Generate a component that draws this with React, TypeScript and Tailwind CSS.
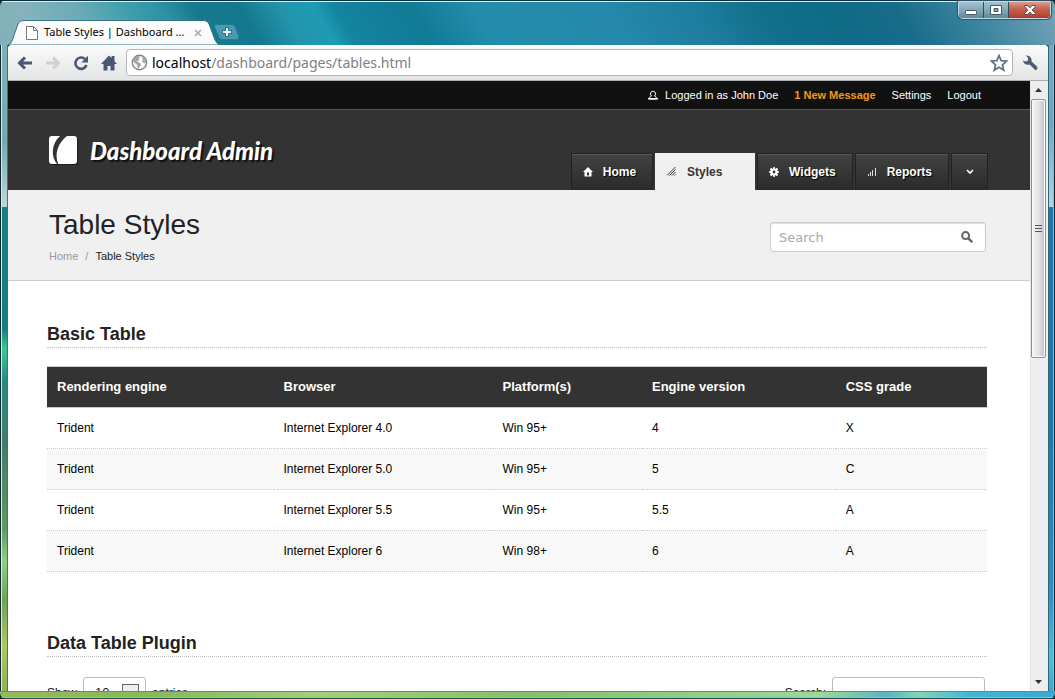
import type { ReactNode } from "react";

const rows = [
  ["Trident", "Internet Explorer 4.0", "Win 95+", "4", "X"],
  ["Trident", "Internet Explorer 5.0", "Win 95+", "5", "C"],
  ["Trident", "Internet Explorer 5.5", "Win 95+", "5.5", "A"],
  ["Trident", "Internet Explorer 6", "Win 98+", "6", "A"],
];

const columns = [
  { label: "Rendering engine", width: "w-[24.1%]" },
  { label: "Browser", width: "w-[23.3%]" },
  { label: "Platform(s)", width: "w-[15.9%]" },
  { label: "Engine version", width: "w-[20.6%]" },
  { label: "CSS grade", width: "w-[16.1%]" },
];

function WindowButtons() {
  return (
    <div className="absolute top-0 right-1 flex h-[18px] overflow-hidden rounded-b-[5px] border border-[#c5dbe3] bg-[#24404f] shadow-[0_0_1px_1px_#2d5566]">
      <button aria-label="Minimize" className="flex w-[25px] items-center justify-center border-r border-[#2d4c5c] bg-linear-to-b from-[#a5c3cf] via-[#86a9b9] via-45% to-[#5f8a9e]">
        <svg width="14" height="12" viewBox="0 0 14 12"><rect x="1.5" y="6.5" width="11" height="4" rx="1" fill="#fff" stroke="#47596a" /></svg>
      </button>
      <button aria-label="Maximize" className="flex w-[25px] items-center justify-center border-r border-[#2d4c5c] bg-linear-to-b from-[#a5c3cf] via-[#86a9b9] via-45% to-[#5f8a9e]">
        <svg width="14" height="12" viewBox="0 0 14 12"><path fillRule="evenodd" d="M1.5 1.5h11v9h-11zM5 4.5v3h4v-3z" fill="#fff" stroke="#47596a" /></svg>
      </button>
      <button aria-label="Close window" className="flex w-[41px] items-center justify-center bg-linear-to-b from-[#dc9a8c] via-[#c4614f] via-45% to-[#b53a25]">
        <svg width="14" height="12" viewBox="0 0 14 12"><path d="M1.5 1.5h3.3L7 3.8l2.2-2.3h3.3v1L9.2 6l3.3 3.5v1H9.2L7 8.2l-2.2 2.3H1.5v-1L4.8 6 1.5 2.5z" fill="#fff" stroke="#6b4048" /></svg>
      </button>
    </div>
  );
}

function TitleBar() {
  return (
    <div className="relative h-[45px] shrink-0 border-t border-[#0d2f40] bg-[linear-gradient(60deg,#7fb0b8_0%,#86b3bb_4%,#6aabb6_9%,#46a0ae_13%,#2d91a3_17%,#17798e_20%,#14778c_24%,#2294ab_28%,#1f9bb4_31%,#14859f_33%,#117a95_40%,#248dac_46%,#2489aa_58%,#1f7d9f_66%,#12708c_72%,#0f6a86_79%,#186c8a_85%,#3d86a0_92%,#78a5b9_100%)] shadow-[inset_0_1px_0_#d9f1f6]">
      <div className="absolute bottom-0 left-2 h-[25px] w-[232px]">
        <svg className="absolute inset-0" width="232" height="25" viewBox="0 0 232 25">
          <defs>
            <linearGradient id="tab" x1="0" y1="0" x2="0" y2="1"><stop offset="0" stopColor="#fff" /><stop offset="1" stopColor="#f8f8f9" /></linearGradient>
          </defs>
          <path d="M206.5 7Q205.5 4.5 208 4.5H224Q226.5 4.5 227.5 7L230.8 16.5Q231.5 19.5 229 19.5H215Q212 19.5 211 17.5Z" fill="#4b98af" stroke="#237b98" />
          <path d="M0 25Q3 24 4 21L10 4Q11.5.5 15 .5H196Q199.5.5 201 4L207 20Q209 25 213 25Z" fill="url(#tab)" stroke="#33758a" />
          <path d="M217.5 7.500h3v3h3v3h-3v3h-3v-3h-3v-3h3z" fill="#e4f1f6" stroke="#286f88" />
          <path d="M18.5 6.5h7l4 4v9h-11zM25.5 6.5v4h4" fill="#fff" stroke="#777" />
        </svg>
        <div className="relative flex h-full items-center pl-9">
          <span className="w-[143px] text-[11px] whitespace-nowrap text-black">Table Styles | Dashboard ...</span>
          <button aria-label="Close tab" className="ml-[3px] flex h-4 w-4 items-center justify-center">
            <svg width="8" height="8" viewBox="0 0 8 8"><path d="M1 1l6 6M7 1L1 7" stroke="#aaa" strokeWidth="1.5" /></svg>
          </button>
          <button aria-label="New tab" className="ml-2 h-4 w-6" />
        </div>
      </div>
      <WindowButtons />
    </div>
  );
}

function ToolButton({ label, children }: { label: string; children: ReactNode }) {
  return (
    <button aria-label={label} className="flex h-7 w-7 items-center justify-center">
      <svg width="16" height="16" viewBox="0 0 16 16" fill="none">{children}</svg>
    </button>
  );
}

function Toolbar() {
  return (
    <div className="flex h-9 shrink-0 items-center rounded-t-[3px] border-b border-[#a9acb0] bg-linear-to-b from-[#fbfbfb] to-[#e3e4e5] pr-1 pl-[3px]">
      <ToolButton label="Back"><path d="M15 8H3M8 2.5L2.5 8L8 13.5" stroke="#4a5871" strokeWidth="3" /></ToolButton>
      <ToolButton label="Forward"><path d="M1 8h12M8 2.5L13.5 8L8 13.5" stroke="#cfd0d2" strokeWidth="3" /></ToolButton>
      <ToolButton label="Reload"><path d="M13.5 10A5.700 5.700 0 1 1 12 4" stroke="#4a5871" strokeWidth="2.6" /><path d="M15 .8v6.700H8.300z" fill="#4a5871" /></ToolButton>
      <ToolButton label="Home page"><path d="M8 .5l2.5 2.6V1h3v5.2L16 9h-2.5v6.5H9.5V11h-3v4.5h-4V9H0z" fill="#4a5871" /></ToolButton>
      <div className="ml-[3px] flex h-[27px] flex-1 items-center rounded-[4px] border border-[#b4b6b9] bg-white px-1">
        <svg width="17" height="17" viewBox="0 0 17 17">
          <circle cx="8.5" cy="8.5" r="7.2" fill="#fdfdfd" stroke="#858585" strokeWidth="1.4" />
          <path d="M2 5.5C3.5 2.8 6 1.8 8 2l1 1.500-1.500 1.200.5 1.500-2 1.300 3.500 1.700.5 1.800-2.500 3.500-1-.5-.5-3.500L3 8.500zM11 2.500l3 2.500 1 3.500-2 1-1.800-2 .5-2z" fill="#a5a5a5" />
        </svg>
        <input aria-label="Address" defaultValue="localhost/dashboard/pages/tables.html" className="sr-only" />
        <div className="ml-1 flex-1 text-[14px] leading-6 text-[#808080]"><span className="text-black">localhost</span>/dashboard/pages/tables.html</div>
        <button aria-label="Bookmark this page">
          <svg width="18" height="18" viewBox="0 0 18 18"><path d="M9 1.6l2.200 5 5.400.5-4.100 3.600 1.200 5.400L9 13.300l-4.700 2.800 1.200-5.400L1.400 7.100l5.400-.5z" fill="#fff" stroke="#65728a" strokeWidth="1.8" /></svg>
        </button>
      </div>
      <button aria-label="Customize and control" className="ml-[3px] flex h-7 w-7 items-center justify-center">
        <svg width="16" height="16" viewBox="0 0 16 16"><path d="M3.5.6Q8 .3 9.300 3.500Q9.700 5 9.500 6.300L15.300 12Q16 14.500 13.500 15.300L7.600 9.500Q2.500 10.700.7 5.500L3.700 6.600 6.200 5.300 5.700 2.200Z" fill="#4e5c79" /></svg>
      </button>
    </div>
  );
}

function NavTab({ label, children }: { label: string; children: ReactNode }) {
  return (
    <a href="#" className="flex items-center gap-[10px] border border-b-0 border-[#222] bg-linear-to-b from-[#424242] to-[#2b2b2b] pr-4 pl-[11px] text-[12px] font-bold text-white shadow-[inset_0_1px_0_#5a5a5a] [text-shadow:1px_1px_1px_#000]">
      {children}
      {label}
    </a>
  );
}

function SiteHeader() {
  return (
    <header>
      <div className="flex h-[29px] items-center justify-end gap-4 border-b border-[#555] bg-[#111] pr-[49px] text-[11px] text-white">
        <a href="#" className="flex items-center gap-[7px]">
          <svg width="10" height="10" viewBox="0 0 10 10"><path d="M3.5 6A2.6 2.6 0 1 1 6.5 6L8.5 7.5V9H1.5V7.5Z" fill="none" stroke="#fff" /><path d="M0 8h10v1.5H0z" fill="#fff" /></svg>
          Logged in as John Doe
        </a>
        <a href="#" className="font-bold text-[#f39a12]">1 New Message</a>
        <a href="#">Settings</a>
        <a href="#">Logout</a>
      </div>
      <div className="flex h-20 items-end justify-between bg-[#333] pr-[42px] pl-[41px]">
        <a href="#" className="mb-6 flex items-center gap-3">
          <svg width="29" height="30" viewBox="0 0 29 30">
            <rect x="1" y="1" width="28" height="28" rx="3" fill="#1c1c1c" />
            <rect width="28" height="28" rx="3" fill="#fff" />
            <path d="M11 0C2 8 2 21 8 28h1.300C5 18 9 7 18 0z" fill="#333" />
          </svg>
          <span className="font-['Lato'] text-[24px] leading-7 font-black text-white italic [text-shadow:2px_2px_1px_#111]">Dashboard Admin</span>
        </a>
        <nav className="flex h-[37px] gap-[2px]">
          <NavTab label="Home">
            <svg width="10" height="10" viewBox="0 0 10 10"><path d="M5 0l5 5H8.500v4.500h-7V5H0zM4 5.500v3h2v-3z" fillRule="evenodd" fill="#fff" /></svg>
          </NavTab>
          <a href="#" className="flex w-[100px] items-center gap-[11px] bg-[#f0f0f0] pl-3 text-[12px] font-bold text-[#333]">
            <svg width="9" height="9" viewBox="0 0 9 9"><path d="M0 8.500L8.500 0M2.500 8.500L8.500 2.500M5 8.500L8.500 5M7.500 8.500l1-1" stroke="#333" /></svg>
            Styles
          </a>
          <NavTab label="Widgets">
            <svg width="10" height="10" viewBox="0 0 10 10"><path d="M5 .3v9.400M.3 5h9.400M1.500 1.500l7 7M8.500 1.500l-7 7" stroke="#fff" strokeWidth="2" /><circle cx="5" cy="5" r="2.600" fill="none" stroke="#fff" strokeWidth="2" /><circle cx="5" cy="5" r="1.400" fill="#333" /></svg>
          </NavTab>
          <NavTab label="Reports">
            <svg width="10" height="10" viewBox="0 0 10 10" shapeRendering="crispEdges"><path d="M1 7h1v2H1zM3 5h1v4H3zM5 3h1v6H5zM8 1h1v8H8z" fill="#ddd" /></svg>
          </NavTab>
          <button aria-label="More" className="flex w-[37px] items-center justify-center border border-b-0 border-[#222] bg-linear-to-b from-[#424242] to-[#2b2b2b] shadow-[inset_0_1px_0_#5a5a5a]">
            <svg width="8" height="6" viewBox="0 0 8 6"><path d="M1 1l3 3 3-3" fill="none" stroke="#fff" strokeWidth="1.6" /></svg>
          </button>
        </nav>
      </div>
      <div className="flex h-[91px] justify-between border-b border-[#ccc] bg-[#f0f0f0] pr-11 pl-[41px]">
        <div className="pt-[19px]">
          <h1 className="text-[28px] leading-8 text-[#222]">Table Styles</h1>
          <nav className="mt-[7px] flex gap-[7px] text-[11px] leading-4 text-[#999]">
            <a href="#">Home</a>
            <span>/</span>
            <span className="text-[#222]">Table Styles</span>
          </nav>
        </div>
        <div className="mt-8 flex h-[30px] w-[216px] items-center rounded-[3px] border border-[#ccc] bg-white pr-3 pl-2 shadow-[inset_0_1px_1px_#ddd]">
          <input aria-label="Search site" placeholder="Search" className="min-w-0 flex-1 pt-px font-['DejaVu_Sans'] text-[13px] outline-none placeholder:text-[#aaa]" />
          <button aria-label="Search">
            <svg width="12" height="12" viewBox="0 0 12 12"><circle cx="4.600" cy="4.600" r="3.500" fill="none" stroke="#666" strokeWidth="2" /><path d="M7.200 7.200l4 4" stroke="#666" strokeWidth="2.400" /></svg>
          </button>
        </div>
      </div>
    </header>
  );
}

function SectionTitle({ children }: { children: ReactNode }) {
  return <h2 className="border-b border-dotted border-[#bbb] text-[18px] leading-[26px] font-bold text-[#222]">{children}</h2>;
}

function Content() {
  return (
    <main className="pt-10 pr-[43px] pl-[39px]">
      <SectionTitle>Basic Table</SectionTitle>
      <table className="mt-[18px] w-full table-fixed border-collapse text-left text-[12px] text-black">
        <thead>
          <tr className="h-[41px] border-y border-[#ccc] bg-[#333] text-[13px] text-white">
            {columns.map((c) => (
              <th key={c.label} className={`px-2.5 ${c.width}`}>{c.label}</th>
            ))}
          </tr>
        </thead>
        <tbody>
          {rows.map((row) => (
            <tr key={row[1]} className="h-[41px] border-b border-dotted border-[#ccc] even:bg-[#f8f8f8]">
              {row.map((cell, i) => (
                <td key={i} className="px-2.5">{cell}</td>
              ))}
            </tr>
          ))}
        </tbody>
      </table>
      <div className="mt-[58px]">
        <SectionTitle>Data Table Plugin</SectionTitle>
      </div>
      <div className="mt-5 flex justify-between pr-[2px] text-[12px] text-[#222]">
        <label className="flex items-center gap-1.5">
          Show
          <span className="relative">
            <select defaultValue="10" className="h-8 w-[63px] appearance-none rounded-[3px] border border-[#bbb] bg-white pl-[11px] text-[13px]">
              <option>10</option>
              <option>25</option>
              <option>50</option>
            </select>
            <span className="pointer-events-none absolute top-[7px] right-[7px] h-[18px] w-[17px] border border-[#666] bg-[#eee]" />
          </span>
          entries
        </label>
        <label className="flex items-center gap-1.5">
          Search:
          <input className="h-8 w-[153px] rounded-[3px] border border-[#bbb] bg-white px-2" />
        </label>
      </div>
    </main>
  );
}

function Scrollbar() {
  return (
    <div className="flex w-[18px] shrink-0 flex-col items-center border-l border-[#e4e4e4] bg-[#eeeef0] pr-[2px]">
      <svg className="mt-[6px] mb-[6px] shrink-0" width="7" height="6" viewBox="0 0 7 6"><path d="M3.5 1L7 5H0z" fill="#333" /></svg>
      <div className="flex h-[42.5%] w-[15px] shrink-0 items-center justify-center rounded-[2px] border border-[#8e8e92] bg-linear-to-r from-[#f4f4f4] via-[#e4e4e6] to-[#bfbfc6] shadow-[inset_0_0_0_1px_#fafafa]">
        <svg width="7" height="8" viewBox="0 0 7 8" shapeRendering="crispEdges"><path d="M0 0h7v1H0zM0 3h7v1H0zM0 6h7v1H0z" fill="#555" /></svg>
      </div>
      <div className="flex-1" />
      <svg className="mb-[6px]" width="7" height="5" viewBox="0 0 7 5"><path d="M0 0h7L3.5 4z" fill="#333" /></svg>
    </div>
  );
}

export default function App() {
  return (
    <div className="h-screen overflow-hidden bg-[#082530] font-['Liberation_Sans',sans-serif]">
      <div className="flex h-full flex-col overflow-hidden rounded-[6px]">
        <div className="contents font-['Noto_Sans',sans-serif]">
          <TitleBar />
        </div>
        <div className="flex min-h-0 flex-1">
          <div className="w-2 shrink-0 border-r border-l border-r-[#496e74] border-l-[#10282c] bg-[linear-gradient(#7fb0b9_0%,#76aab3_15%,#bdd7da_25%,#1c7e82_25%,#1a7d7d_44%,#3cc79a_47%,#258a83_52%,#407e68_62%,#5f9a65_75%,#8fd184_80%,#6da557_86%,#b0c666_93%,#8cb257_100%)] shadow-[inset_1px_0_0_#d5eff0]" />
          <div className="flex min-w-0 flex-1 flex-col">
            <div className="contents font-['Noto_Sans',sans-serif]">
              <Toolbar />
            </div>
            <div className="flex min-h-0 flex-1 bg-white">
              <div className="min-w-0 flex-1 overflow-hidden">
                <SiteHeader />
                <Content />
              </div>
              <Scrollbar />
            </div>
          </div>
          <div className="w-[7px] shrink-0 border-r border-l border-r-[#0b2937] border-l-[#31667c] bg-[linear-gradient(#78a9bf_0%,#6fa6bd_12%,#b5d4df_25%,#1f78a8_25%,#1d79a8_60%,#2f8fc0_85%,#4fc0df_95%,#3aa7d0_100%)] shadow-[inset_-1px_0_0_#51d2ee]" />
        </div>
        <div className="h-2 shrink-0 border-t border-b border-t-[#6b8a76] border-b-[#1c5561] bg-[linear-gradient(90deg,#96b85c_0%,#86b958_15%,#a5cf78_30%,#84c06a_50%,#9bd89a_78%,#58b5c2_84%,#7fd6b4_87%,#41b5d8_92%,#3aa9d2_100%)] shadow-[inset_0_-1px_0_#5fd2e0]" />
      </div>
    </div>
  );
}
